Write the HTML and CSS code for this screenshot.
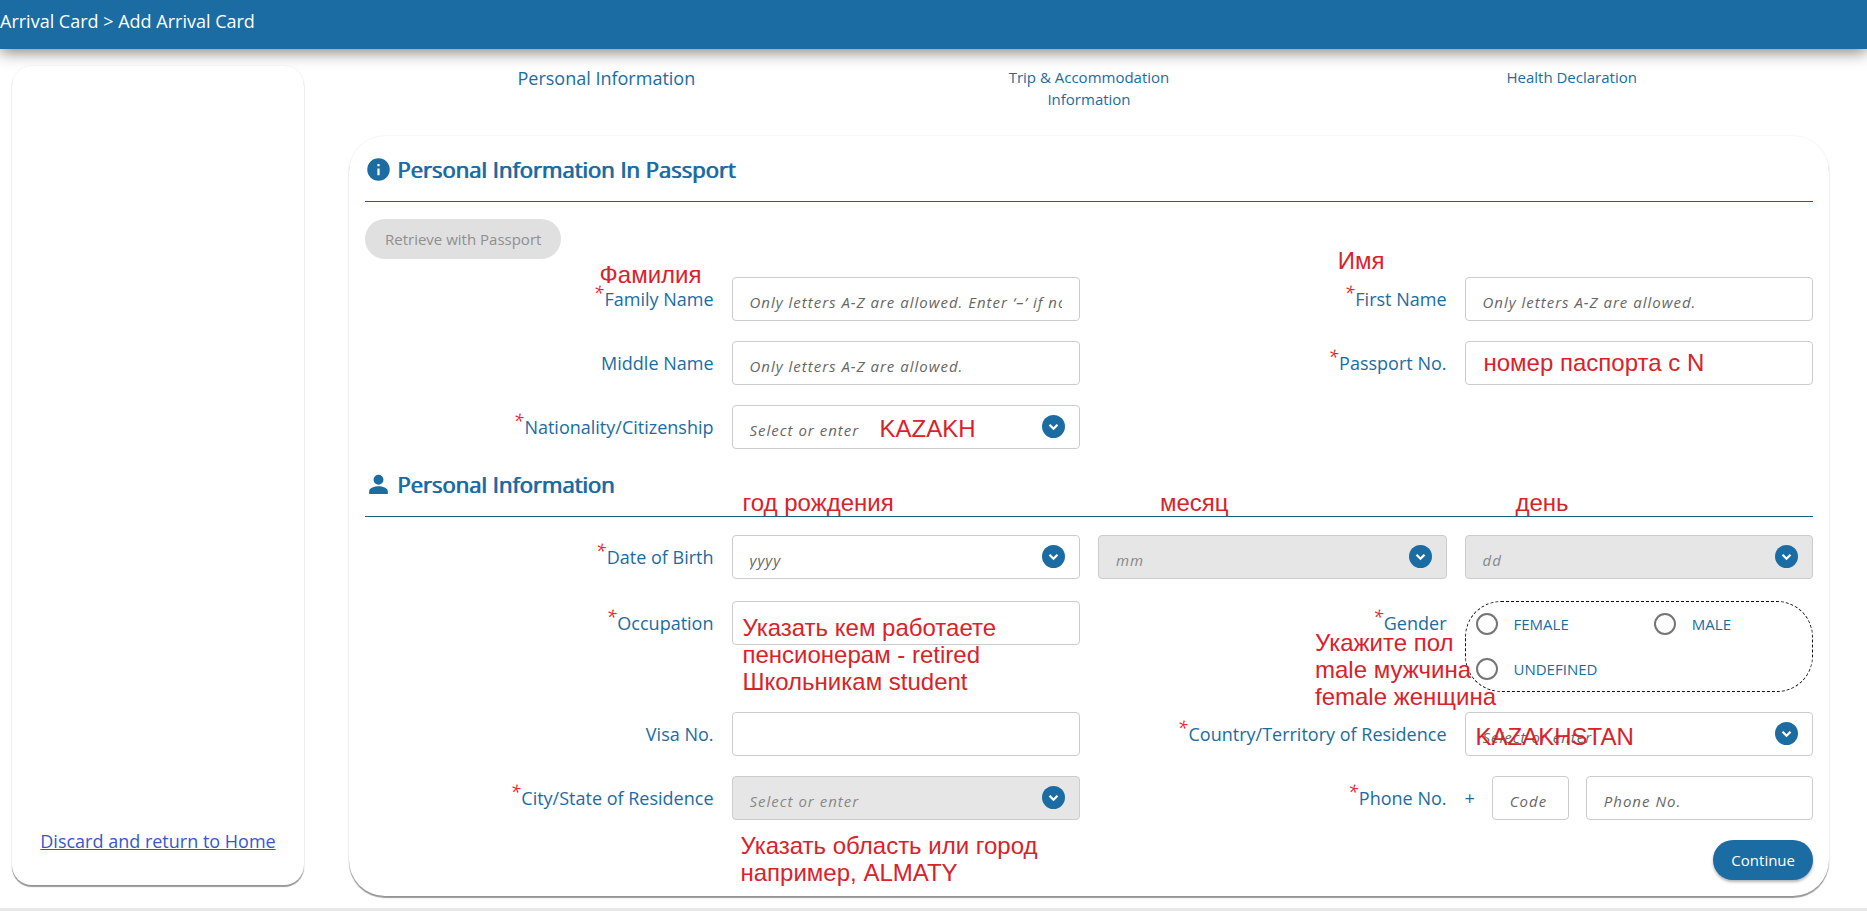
FILE: index.html
```html
<!DOCTYPE html>
<html lang="en">
<head>
  <meta charset="UTF-8">
  <meta name="viewport" content="width=device-width, initial-scale=1.0">
  <title>Add Arrival Card</title>
  <link rel="stylesheet" href="styles.css">
</head>
<body>
  <svg class="symbols" aria-hidden="true">
    <symbol id="chevron" viewBox="0 0 24 24">
      <circle cx="12" cy="12" r="12" fill="#1b6ca3"/>
      <path d="M7.8 10.2l4.2 4.1 4.2-4.1" fill="none" stroke="#fff" stroke-width="2.4"/>
    </symbol>
  </svg>

  <header class="topbar">Arrival Card &gt; Add Arrival Card</header>

  <div class="layout">
    <aside class="sidebar">
      <a href="#">Discard and return to Home</a>
    </aside>

    <main class="content">
      <nav class="steps">
        <div class="step active"><span>Personal Information</span></div>
        <div class="step"><span>Trip &amp; Accommodation Information</span></div>
        <div class="step"><span>Health Declaration</span></div>
      </nav>

      <form class="card">
        <h2 class="section-title">
          <svg viewBox="0 0 24 24" width="27" height="27"><path fill="currentColor" d="M12 2a10 10 0 1 0 0 20 10 10 0 0 0 0-20zm1 15h-2v-6h2v6zm0-8h-2V7h2v2z"/></svg>
          Personal Information In Passport
        </h2>

        <button type="button" class="btn btn-disabled" disabled>Retrieve with Passport</button>

        <div class="grid">
          <div class="label">
            <label for="familyName"><sup>*</sup>Family Name</label>
            <span class="note note-family">Фамилия</span>
          </div>
          <div class="field"><input id="familyName" type="text" placeholder="Only letters A-Z are allowed. Enter ‘–’ if no family name."></div>
          <div class="label">
            <label for="firstName"><sup>*</sup>First Name</label>
            <span class="note note-first">Имя</span>
          </div>
          <div class="field"><input id="firstName" type="text" placeholder="Only letters A-Z are allowed."></div>

          <div class="label"><label for="middleName">Middle Name</label></div>
          <div class="field"><input id="middleName" type="text" placeholder="Only letters A-Z are allowed."></div>
          <div class="label"><label for="passportNo"><sup>*</sup>Passport No.</label></div>
          <div class="field">
            <input id="passportNo" type="text">
            <span class="note note-passport">номер паспорта с N</span>
          </div>

          <div class="label"><label for="nationality"><sup>*</sup>Nationality/Citizenship</label></div>
          <div class="field">
            <input id="nationality" type="text" placeholder="Select or enter">
            <svg class="arrow"><use href="#chevron"/></svg>
            <span class="note note-nationality">KAZAKH</span>
          </div>
        </div>

        <h2 class="section-title section-title-second">
          <svg viewBox="0 0 24 24" width="27" height="27"><path fill="currentColor" d="M12 12.200a4.400 4.400 0 1 0 0-8.800 4.400 4.400 0 0 0 0 8.800zM12 13.500c-3.500 0-8.300 1.400-8.300 4.400V20.500h16.600v-2.600c0-3-4.800-4.400-8.300-4.400z"/></svg>
          Personal Information
        </h2>

        <div class="grid">
          <div class="label"><label for="birthYear"><sup>*</sup>Date of Birth</label></div>
          <div class="field">
            <select id="birthYear"><option>yyyy</option></select>
            <svg class="arrow"><use href="#chevron"/></svg>
            <span class="note note-year">год рождения</span>
          </div>
          <div class="field">
            <select id="birthMonth" aria-label="Month of birth" disabled><option>mm</option></select>
            <svg class="arrow"><use href="#chevron"/></svg>
            <span class="note note-month">месяц</span>
          </div>
          <div class="field">
            <select id="birthDay" aria-label="Day of birth" disabled><option>dd</option></select>
            <svg class="arrow"><use href="#chevron"/></svg>
            <span class="note note-day">день</span>
          </div>
        </div>

        <div class="grid grid-details">
          <div class="label"><label for="occupation"><sup>*</sup>Occupation</label></div>
          <div class="field">
            <input id="occupation" type="text">
            <span class="note note-occupation">Указать кем работаете<br>пенсионерам - retired<br>Школьникам student</span>
          </div>
          <div class="label">
            <span id="genderLabel"><sup>*</sup>Gender</span>
            <span class="note note-gender">Укажите пол<br>male мужчина<br>female женщина</span>
          </div>
          <div class="radios" role="radiogroup" aria-labelledby="genderLabel">
            <label><input type="radio" name="gender">FEMALE</label>
            <label><input type="radio" name="gender">MALE</label>
            <label><input type="radio" name="gender">UNDEFINED</label>
          </div>

          <div class="label"><label for="visaNo">Visa No.</label></div>
          <div class="field"><input id="visaNo" type="text"></div>
          <div class="label"><label for="country"><sup>*</sup>Country/Territory of Residence</label></div>
          <div class="field">
            <input id="country" type="text" placeholder="Select or enter">
            <svg class="arrow"><use href="#chevron"/></svg>
            <span class="note note-country">KAZAKHSTAN</span>
          </div>

          <div class="label"><label for="city"><sup>*</sup>City/State of Residence</label></div>
          <div class="field">
            <input id="city" type="text" placeholder="Select or enter" disabled>
            <svg class="arrow"><use href="#chevron"/></svg>
            <span class="note note-city">Указать область или город<br>например, ALMATY</span>
          </div>
          <div class="label"><label for="phone"><sup>*</sup>Phone No.</label></div>
          <div class="phone">
            <span>+</span>
            <input class="code" type="text" placeholder="Code" aria-label="Country code">
            <input id="phone" type="text" placeholder="Phone No.">
          </div>
        </div>

        <div class="actions">
          <button type="submit" class="btn btn-primary">Continue</button>
        </div>
      </form>
    </main>
  </div>

  <footer class="footer"></footer>
</body>
</html>
```
FILE: styles.css
```css
* {
  box-sizing: border-box;
}
body {
  margin: 0;
  font-family: "Open Sans", sans-serif;
  font-size: 18px;
  color: #1b6ca3;
  background: #fff;
}
.symbols {
  display: none;
}
.topbar {
  height: 49px;
  padding-top: 8px;
  line-height: 26px;
  font-weight: 500;
  color: #fff;
  background: #1b6ca3;
  box-shadow: 0 3px 16px rgba(0, 0, 0, 0.5);
}
.layout {
  display: flex;
  gap: 45px;
  padding: 17px 38px 12px 12px;
}
.sidebar {
  display: flex;
  flex-direction: column;
  justify-content: flex-end;
  align-items: center;
  flex: 0 0 292px;
  margin-bottom: 11px;
  padding-bottom: 31px;
  border-radius: 20px;
  background: #fff;
  box-shadow: 0 2px 1px rgba(0, 0, 0, 0.4), 0 0 2px rgba(0, 0, 0, 0.1);
}
.sidebar a {
  color: #3558c8;
  line-height: 26px;
}
.content {
  flex: 1;
  min-width: 0;
}

/* steps */
.steps {
  display: flex;
  height: 70px;
  padding: 0 16px;
}
.step {
  flex: 1;
  display: flex;
  justify-content: center;
  font-size: 15px;
  line-height: 22px;
  text-align: center;
}
.step span {
  max-width: 200px;
}
.step.active {
  font-size: 18px;
  line-height: 24px;
}

/* form card */
.card {
  padding: 16px;
  border-radius: 36px;
  background: #fff;
  box-shadow: 0 2px 1px rgba(0, 0, 0, 0.4), 0 0 2px rgba(0, 0, 0, 0.1);
}
.section-title {
  display: flex;
  align-items: center;
  gap: 5px;
  height: 50px;
  margin: 0 0 17px;
  padding-bottom: 15px;
  border-bottom: 1px solid #1b6080;
  font-size: 22px;
  font-weight: 400;
  text-shadow: 1px 0 currentColor;
}
.section-title-second {
  margin-top: 18px;
  margin-bottom: 18px;
}
.grid {
  display: grid;
  grid-template-columns: repeat(4, 1fr);
  gap: 20px 18px;
  margin-top: 18px;
}
.grid-details {
  margin-top: 22px;
}
.label,
.field {
  position: relative;
  height: 44px;
}
.label {
  line-height: 44px;
  text-align: right;
  white-space: nowrap;
}
.label sup {
  margin-right: 1px;
  font-size: 18px;
  font-style: italic;
  line-height: 0;
  color: #e8242c;
}
input[type="text"],
select {
  display: block;
  width: 100%;
  height: 44px;
  margin: 0;
  padding: 6px 17px 0;
  border: 1px solid #ccc;
  border-radius: 4px;
  background: #fff;
  color: #666;
  font-family: inherit;
  font-size: 15px;
  font-style: italic;
  letter-spacing: 1px;
  appearance: none;
}
input::placeholder {
  color: #666;
}
input:disabled,
select:disabled {
  background: #e6e6e6;
  color: #888;
  opacity: 1;
}
input:disabled::placeholder {
  color: #888;
}
.arrow {
  position: absolute;
  top: 10px;
  right: 15px;
  width: 23px;
  height: 23px;
  pointer-events: none;
}
.radios {
  display: grid;
  grid-template-columns: 53% 1fr;
  height: 91px;
  padding: 0 0 0 10px;
  border: 1px dashed #111;
  border-radius: 36px;
}
.radios label {
  display: flex;
  align-items: center;
  gap: 16px;
  font-size: 15px;
}
.radios input {
  width: 22px;
  height: 22px;
  margin: 0;
  border: 2px solid #757575;
  border-radius: 50%;
  background: #fff;
  appearance: none;
}
.phone {
  display: flex;
  align-items: center;
  gap: 17px;
}
.phone .code {
  flex: 0 0 77px;
}
.actions {
  display: flex;
  justify-content: flex-end;
  margin-top: 20px;
}
.btn {
  height: 40px;
  padding: 0 18px;
  border: none;
  border-radius: 20px;
  font-family: inherit;
  font-size: 15px;
}
.btn-disabled {
  padding: 0 20px;
  background: #e0e0e0;
  color: #8f8f8f;
}
.btn-primary {
  background: #1b6ca3;
  color: #fff;
  font-weight: 500;
  box-shadow: 0 2px 3px rgba(0, 0, 0, 0.3);
}
.footer {
  height: 4px;
  background: #e8e8e8;
}

/* red hints written over the form */
.note {
  position: absolute;
  z-index: 1;
  font-family: Arial, "Liberation Sans", sans-serif;
  font-size: 24px;
  line-height: 27px;
  text-align: left;
  white-space: nowrap;
  color: #d9222a;
  pointer-events: none;
}
.note-family {
  top: -16px;
  right: 12px;
}
.note-first {
  top: -30px;
  right: 62px;
}
.note-passport {
  top: 8px;
  left: 19px;
}
.note-nationality {
  top: 10px;
  left: 148px;
}
.note-year {
  top: -46px;
  left: 11px;
}
.note-month {
  top: -46px;
  left: 62px;
}
.note-day {
  top: -46px;
  left: 51px;
}
.note-occupation {
  top: 13px;
  left: 11px;
}
.note-gender {
  top: 28px;
  left: 217px;
}
.note-country {
  top: 11px;
  left: 11px;
}
.note-city {
  top: 56px;
  left: 9px;
}
```
